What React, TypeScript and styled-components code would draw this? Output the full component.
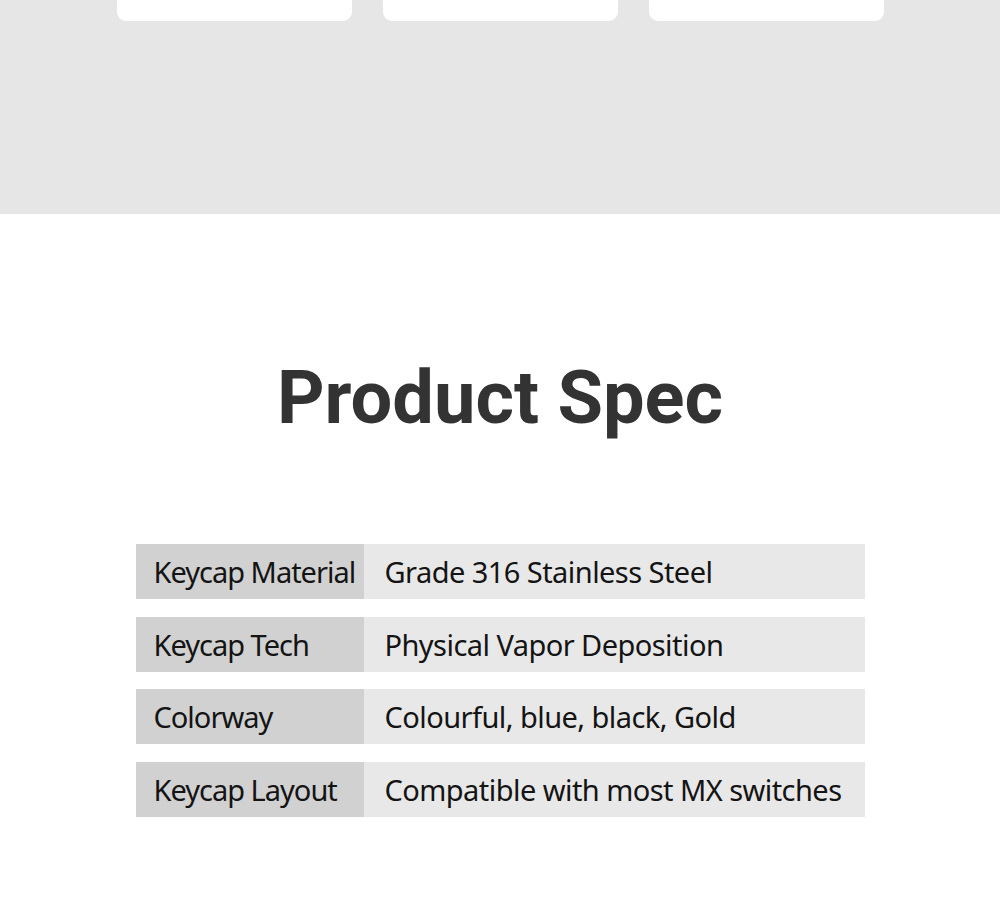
import React from 'react';
import styled, { createGlobalStyle } from 'styled-components';

const GlobalStyle = createGlobalStyle`
  body {
    margin: 0;
    background: #fff;
    font-family: "Noto Sans", "Open Sans", sans-serif;
  }
`;

const specs = [
  { label: 'Keycap Material', value: 'Grade 316 Stainless Steel' },
  { label: 'Keycap Tech', value: 'Physical Vapor Deposition' },
  { label: 'Colorway', value: 'Colourful, blue, black, Gold' },
  { label: 'Keycap Layout', value: 'Compatible with most MX switches' },
];

const App = () => {
  return (
    <>
      <GlobalStyle />
      <Page>
        <TopBand>
          <CardRow>
            <Card />
            <Card />
            <Card />
          </CardRow>
        </TopBand>
        <SpecSection>
          <Title>Product Spec</Title>
          <SpecTable>
            {specs.map((s) => (
              <SpecRow key={s.label}>
                <Label>{s.label}</Label>
                <Value>{s.value}</Value>
              </SpecRow>
            ))}
          </SpecTable>
        </SpecSection>
      </Page>
    </>
  );
};

const Page = styled.div`
  width: 1000px;
  height: 915px;
  overflow: hidden;
`;

const TopBand = styled.div`
  height: 214px;
  background: #e6e6e6;
`;

const CardRow = styled.div`
  display: flex;
  gap: 31px;
  padding-left: 117px;
`;

const Card = styled.div`
  width: 235px;
  height: 21px;
  background: #fff;
  border-radius: 0 0 9px 9px;
`;

const SpecSection = styled.div`
  display: flex;
  flex-direction: column;
  align-items: center;
`;

const Title = styled.h1`
  margin: 141px 0 0;
  font-family: Roboto, "Liberation Sans", sans-serif;
  font-weight: 700;
  font-size: 74px;
  line-height: 86px;
  color: #333;
`;

const SpecTable = styled.div`
  margin-top: 103px;
  width: 729px;
  display: flex;
  flex-direction: column;
  gap: 17.5px;
`;

const SpecRow = styled.div`
  display: flex;
  height: 55px;
  font-size: 29px;
  color: #141414;
`;

const Label = styled.div`
  width: 228px;
  background: #d1d1d1;
  display: flex;
  align-items: center;
  padding-left: 18px;
  box-sizing: border-box;
  letter-spacing: -1px;
`;

const Value = styled.div`
  flex: 1;
  background: #e8e8e8;
  display: flex;
  align-items: center;
  padding-left: 21px;
  letter-spacing: -0.55px;
`;

export default App;
